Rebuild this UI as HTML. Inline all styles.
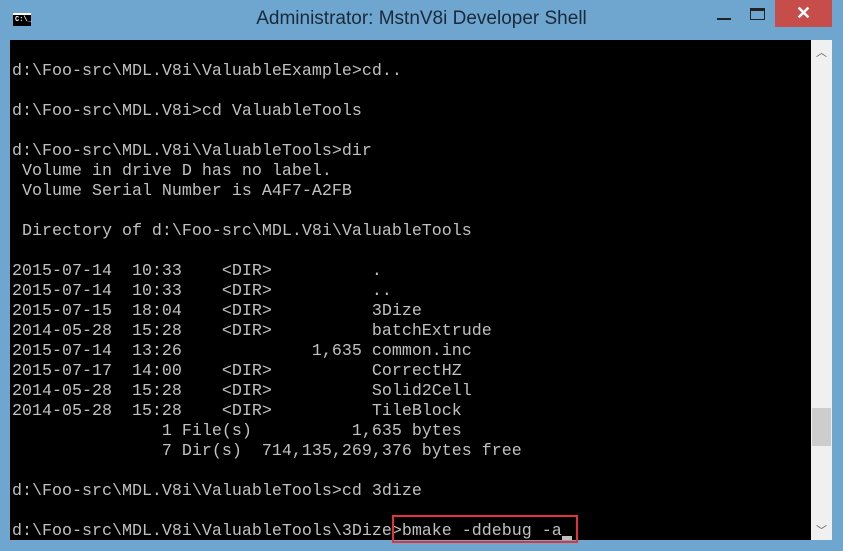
<!DOCTYPE html>
<html><head><style>
html,body{margin:0;padding:0;}
body{width:843px;height:551px;background:#6ea6d0;position:relative;overflow:hidden;font-family:"Liberation Sans",sans-serif;}
.title{position:absolute;left:0;top:8px;width:843px;text-align:center;font-size:19px;color:#1a2a3a;}
.icon{position:absolute;left:13px;top:13px;width:18px;height:13px;background:#000;border-top:2px solid #fff;box-sizing:border-box;}
.icon span{position:absolute;left:2px;top:1px;font-size:7px;color:#fff;font-family:"Liberation Mono",monospace;font-weight:bold;}
.close{position:absolute;left:775px;top:0;width:57px;height:27px;background:#c74d4b;color:#fff;text-align:center;font-size:18px;line-height:27px;font-weight:bold;}
.min{position:absolute;left:717px;top:18px;width:14px;height:2px;background:#222;}
.max{position:absolute;left:750px;top:8px;width:15px;height:12px;border:1px solid #222;border-top:3px solid #222;box-sizing:border-box;}
.term{position:absolute;left:10px;top:40px;width:801px;height:500px;background:#000;overflow:hidden;}
pre{margin:0;padding:0;color:#c0c0c0;font-family:"Liberation Mono",monospace;font-size:16.67px;line-height:20px;position:absolute;left:2px;top:2px;}
.sb{position:absolute;left:811px;top:40px;width:21px;height:500px;background:#f0f0f0;}
.thumb{position:absolute;left:812px;top:408px;width:19px;height:38px;background:#cdcdcd;}
.arr{position:absolute;left:811px;width:21px;text-align:center;font-size:11px;color:#606060;}
.red{position:absolute;left:392px;top:515px;width:186px;height:28px;border:2px solid #e0343a;box-sizing:border-box;}
.cur{position:absolute;left:562px;top:536px;width:10px;height:4px;background:#c0c0c0;}
</style></head><body>
<div class="icon"><span>C:\_</span></div>
<div class="title">Administrator: MstnV8i Developer Shell</div>
<div class="min"></div><div class="max"></div>
<div class="close">✕</div>
<div class="term"><pre>&nbsp;
d:\Foo-src\MDL.V8i\ValuableExample&gt;cd..

d:\Foo-src\MDL.V8i&gt;cd ValuableTools

d:\Foo-src\MDL.V8i\ValuableTools&gt;dir
 Volume in drive D has no label.
 Volume Serial Number is A4F7-A2FB

 Directory of d:\Foo-src\MDL.V8i\ValuableTools

2015-07-14  10:33    &lt;DIR&gt;          .
2015-07-14  10:33    &lt;DIR&gt;          ..
2015-07-15  18:04    &lt;DIR&gt;          3Dize
2014-05-28  15:28    &lt;DIR&gt;          batchExtrude
2015-07-14  13:26             1,635 common.inc
2015-07-17  14:00    &lt;DIR&gt;          CorrectHZ
2014-05-28  15:28    &lt;DIR&gt;          Solid2Cell
2014-05-28  15:28    &lt;DIR&gt;          TileBlock
               1 File(s)          1,635 bytes
               7 Dir(s)  714,135,269,376 bytes free

d:\Foo-src\MDL.V8i\ValuableTools&gt;cd 3dize

d:\Foo-src\MDL.V8i\ValuableTools\3Dize&gt;bmake -ddebug -a</pre></div>
<div class="sb"></div>
<div class="thumb"></div>
<div class="arr" style="top:44px">︿</div>
<div class="arr" style="top:522px">﹀</div>
<div class="cur"></div>
<div class="red"></div>
</body></html>
